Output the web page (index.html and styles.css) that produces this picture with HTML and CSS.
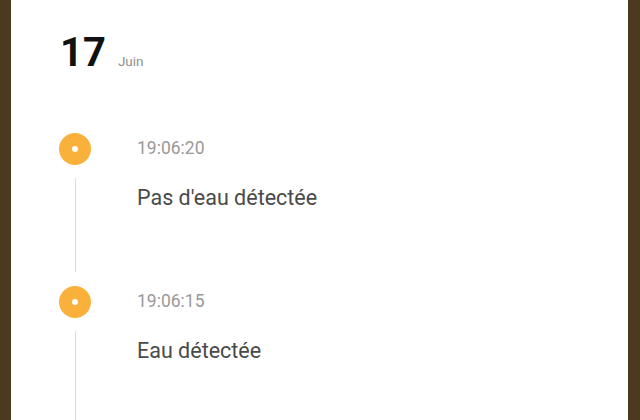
FILE: index.html
```html
<!DOCTYPE html>
<html lang="fr">
<head>
<meta charset="utf-8">
<link rel="stylesheet" href="styles.css">
</head>
<body>
<div class="page">
  <div class="date">
    <span class="day">17</span>
    <span class="month">Juin</span>
  </div>
  <div class="timeline">
    <div class="item">
      <div class="rail">
        <div class="dot"></div>
        <div class="line"></div>
      </div>
      <div class="content">
        <div class="time">19:06:20</div>
        <div class="desc">Pas d'eau détectée</div>
      </div>
    </div>
    <div class="item">
      <div class="rail">
        <div class="dot"></div>
        <div class="line"></div>
      </div>
      <div class="content">
        <div class="time">19:06:15</div>
        <div class="desc">Eau détectée</div>
      </div>
    </div>
  </div>
</div>
</body>
</html>
```
FILE: styles.css
```css
html, body {
  margin: 0;
  padding: 0;
  height: 100%;
  overflow: hidden;
}
body {
  font-family: Roboto, "Noto Sans", sans-serif;
  background: #4b3a1f;
}
.page {
  box-sizing: border-box;
  height: 420px;
  margin: 0 12px 0 11px;
  background: #ffffff;
  padding: 33px 0 0 48px;
  display: flex;
  flex-direction: column;
  overflow: hidden;
}
.date {
  display: flex;
  align-items: baseline;
  gap: 12px;
  line-height: 40px;
  height: 40px;
}
.day {
  font-size: 40px;
  font-weight: 700;
  color: #111;
  margin-left: 1px;
}
.month {
  font-size: 13.5px;
  color: #8f8f8f;
}
.timeline {
  margin-top: 60px;
  display: flex;
  flex-direction: column;
}
.item {
  display: grid;
  grid-template-columns: 32px 1fr;
  column-gap: 46px;
  min-height: 153px;
}
.rail {
  display: flex;
  flex-direction: column;
  align-items: center;
}
.dot {
  width: 32px;
  height: 32px;
  border-radius: 50%;
  background: #f9b13c;
  display: flex;
  align-items: center;
  justify-content: center;
}
.dot::after {
  content: "";
  width: 6px;
  height: 6px;
  border-radius: 50%;
  background: #fff;
}
.line {
  flex: 1;
  width: 1px;
  background: #dcdcdc;
  margin: 13px 0 14px 1px;
}
.content {
  display: flex;
  flex-direction: column;
}
.time {
  font-size: 17.5px;
  line-height: 30px;
  color: #999999;
}
.desc {
  margin-top: 22px;
  font-size: 21.5px;
  line-height: 26px;
  color: #4a4a4a;
}
```
